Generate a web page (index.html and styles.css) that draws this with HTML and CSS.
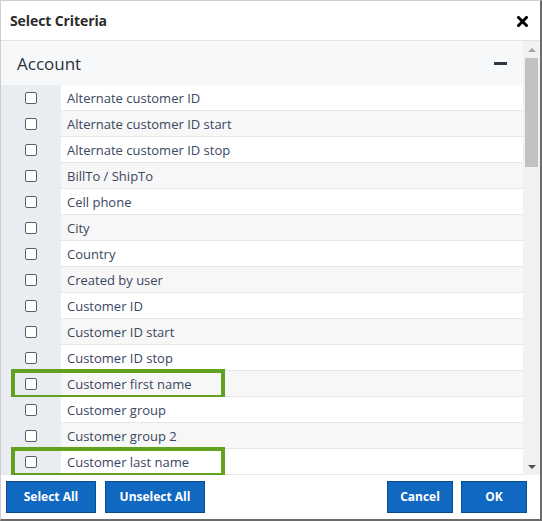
FILE: index.html
```html
<!DOCTYPE html>
<html lang="en">
<head>
<meta charset="utf-8">
<title>Select Criteria</title>
<link rel="stylesheet" href="styles.css">
</head>
<body>
<div class="dialog">
  <div class="titlebar">
    <span class="title">Select Criteria</span>
    <svg class="close" width="11" height="11" viewBox="0 0 11 11"><path d="M1.5 1.5 L9.5 9.5 M9.5 1.5 L1.5 9.5" stroke="#000" stroke-width="3" stroke-linecap="square"/></svg>
  </div>
  <div class="body">
    <div class="scroll">
      <div class="group-head"><span>Account</span><span class="minus"></span></div>
      <div class="list">
        <div class="row"><div class="chk"><span class="box"></span></div><div class="lbl">Alternate customer ID</div></div>
        <div class="row"><div class="chk"><span class="box"></span></div><div class="lbl">Alternate customer ID start</div></div>
        <div class="row"><div class="chk"><span class="box"></span></div><div class="lbl">Alternate customer ID stop</div></div>
        <div class="row"><div class="chk"><span class="box"></span></div><div class="lbl">BillTo / ShipTo</div></div>
        <div class="row"><div class="chk"><span class="box"></span></div><div class="lbl">Cell phone</div></div>
        <div class="row"><div class="chk"><span class="box"></span></div><div class="lbl">City</div></div>
        <div class="row"><div class="chk"><span class="box"></span></div><div class="lbl">Country</div></div>
        <div class="row"><div class="chk"><span class="box"></span></div><div class="lbl">Created by user</div></div>
        <div class="row"><div class="chk"><span class="box"></span></div><div class="lbl">Customer ID</div></div>
        <div class="row"><div class="chk"><span class="box"></span></div><div class="lbl">Customer ID start</div></div>
        <div class="row"><div class="chk"><span class="box"></span></div><div class="lbl">Customer ID stop</div></div>
        <div class="row hl"><div class="chk"><span class="box"></span></div><div class="lbl">Customer first name</div><span class="mark"></span></div>
        <div class="row"><div class="chk"><span class="box"></span></div><div class="lbl">Customer group</div></div>
        <div class="row"><div class="chk"><span class="box"></span></div><div class="lbl">Customer group 2</div></div>
        <div class="row hl"><div class="chk"><span class="box"></span></div><div class="lbl">Customer last name</div><span class="mark"></span></div>
        <div class="row"><div class="chk"><span class="box"></span></div><div class="lbl">Customer name</div></div>
        <div class="row"><div class="chk"><span class="box"></span></div><div class="lbl">Customer number</div></div>
      </div>
    </div>
    <div class="scrollbar">
      <div class="arrow up"></div>
      <div class="track"><div class="thumb"></div></div>
      <div class="arrow down"></div>
    </div>
  </div>
  <div class="footer">
    <div class="btns">
      <button class="btn w90">Select All</button>
      <button class="btn w100">Unselect All</button>
    </div>
    <div class="btns right">
      <button class="btn w66">Cancel</button>
      <button class="btn w66">OK</button>
    </div>
  </div>
</div>
</body>
</html>
```
FILE: styles.css
```css
* { box-sizing: border-box; }
html, body { margin: 0; padding: 0; background: #fff; }
body { font-family: "Open Sans", "Noto Sans", sans-serif; }

.dialog {
  width: 542px;
  height: 521px;
  border-top: 1px solid #cfcfcf;
  border-left: 1px solid #cfcfcf;
  border-right: 2px solid #6b6b6b;
  border-bottom: 2px solid #6b6b6b;
  display: flex;
  flex-direction: column;
  background: #fff;
}

.titlebar {
  height: 40px;
  border-bottom: 1px solid #e3e3e3;
  display: flex;
  align-items: center;
  justify-content: space-between;
  padding: 0 12px 0 9px;
  flex: none;
}
.title { font-weight: 700; font-size: 14px; color: #2b2b2b; letter-spacing: -0.1px; }
.close { display: block; margin-top: 1px; }

.body {
  height: 434px;
  display: flex;
  flex: none;
}
.scroll { flex: 1; overflow: hidden; }

.group-head {
  height: 44px;
  background: #f7f8fa;
  display: flex;
  align-items: center;
  justify-content: space-between;
  padding: 0 16px 0 16px;
  font-size: 17px;
  color: #2a313c;
}
.minus { width: 13px; height: 3px; background: #2e3640; margin-top: 1px; }

.row {
  position: relative;
  height: 26px;
  display: flex;
}
.chk {
  width: 60px;
  background: #e9ecf0;
  display: flex;
  align-items: center;
  justify-content: center;
  flex: none;
}
.box {
  width: 12px;
  height: 12px;
  border: 1.5px solid #5a5e66;
  border-radius: 2px;
  background: #fff;
}
.lbl {
  flex: 1;
  display: flex;
  align-items: center;
  padding-left: 6px;
  font-size: 13px;
  color: #3a4760;
  border-bottom: 1px solid #e6e6e6;
  background: #fff;
}
.row:nth-child(even) .lbl { background: #f7f7f7; }

.mark {
  position: absolute;
  left: 10px;
  top: -2px;
  width: 214px;
  height: 30px;
  border: 4px solid #62a01f;
  pointer-events: none;
}

.scrollbar {
  width: 17px;
  background: #f1f1f1;
  display: flex;
  flex-direction: column;
  flex: none;
}
.arrow { height: 17px; display: flex; align-items: center; justify-content: center; flex: none; }
.arrow.up::before {
  content: "";
  border-left: 4px solid transparent;
  border-right: 4px solid transparent;
  border-bottom: 4px solid #a3a3a3;
}
.arrow.down::before {
  content: "";
  border-left: 4px solid transparent;
  border-right: 4px solid transparent;
  border-top: 4px solid #505050;
}
.track { flex: 1; padding: 0 2px; }
.thumb { height: 109px; background: #c1c1c1; }

.footer {
  flex: 1;
  display: flex;
  align-items: flex-start;
  justify-content: space-between;
  padding: 6px 13px 0 5px;
}
.btns { display: flex; gap: 9px; }
.btns.right { gap: 8px; }
.btn {
  height: 32px;
  display: flex;
  align-items: center;
  justify-content: center;
  background: #1168c1;
  border: 1px solid #0b4e8e;
  color: #fff;
  font-family: "Open Sans", "Noto Sans", sans-serif;
  font-weight: 700;
  font-size: 12px;
  line-height: 16px;
  padding: 0;
  margin: 0;
}
.w90 { width: 90px; }
.w100 { width: 100px; }
.w66 { width: 66px; }
```
